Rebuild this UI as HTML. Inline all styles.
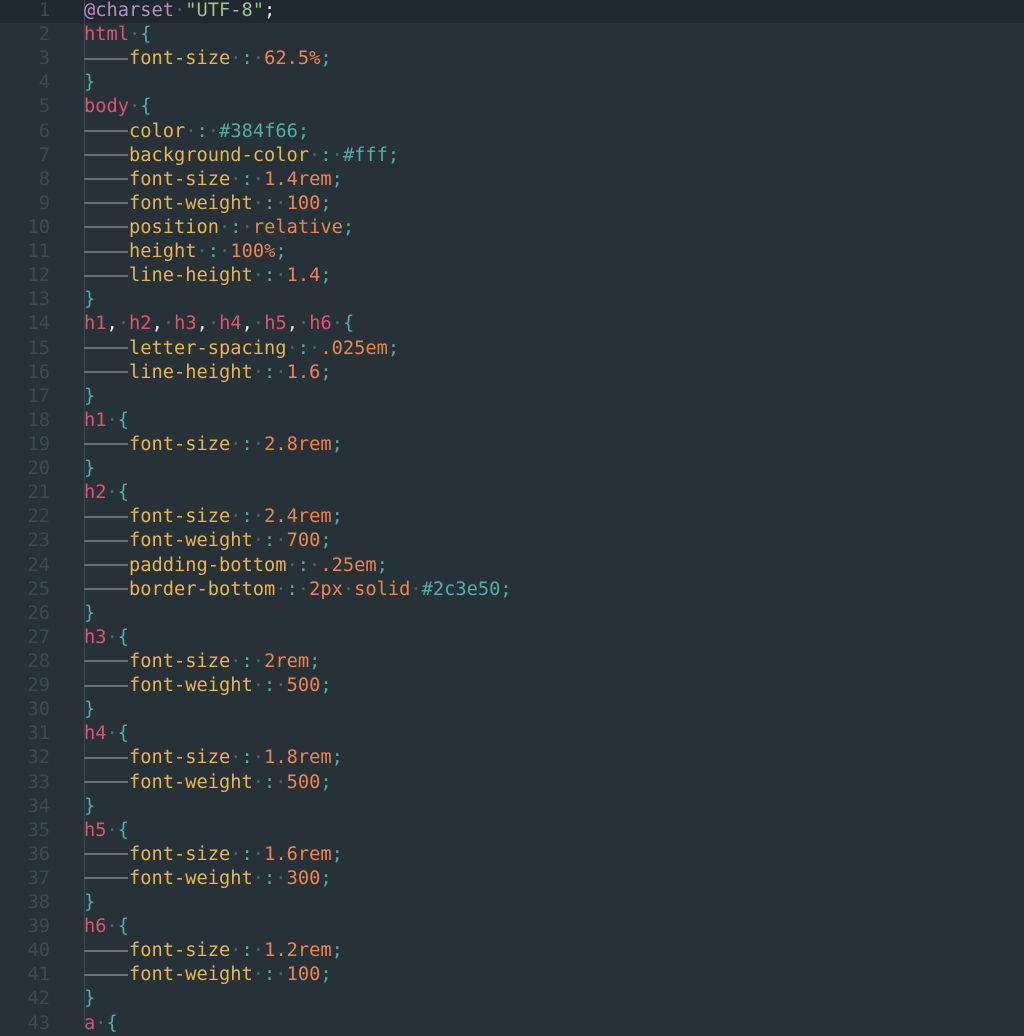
<!DOCTYPE html>
<html><head><meta charset="utf-8">
<style>
html,body{margin:0;padding:0;background:#263238;width:1024px;height:1024px;overflow:hidden}
body{font-family:"DejaVu Sans Mono","Liberation Mono",monospace;font-size:18.7px;}
#hl{position:absolute;left:0;top:0;width:1024px;height:23px;background:#1f282e}
#vl{position:absolute;left:84px;top:0;width:1px;height:1024px;background:#3a4850}
.ln{position:absolute;left:0;width:50px;text-align:right;color:#3b4a53}
.cd{position:absolute;left:84px;white-space:nowrap;color:#e8e8e8}
.row{height:24.12px;line-height:24.12px;white-space:nowrap}
.s{color:#e0546e}.p{color:#eab54f}.v{color:#f0844f}.t{color:#50aeaa}.a{color:#b58fc0}.g{color:#9cc38a}.w{color:#eee}
.d{color:#55646c}
.i{display:inline-block;width:44px;height:2px;background:#64727a;vertical-align:middle;margin-right:1px}
</style></head><body>
<div id="hl"></div><div id="vl"></div>
<div class="ln" style="top:-1px"><div class="row">1</div><div class="row">2</div><div class="row">3</div><div class="row">4</div><div class="row">5</div><div class="row">6</div><div class="row">7</div><div class="row">8</div><div class="row">9</div><div class="row">10</div><div class="row">11</div><div class="row">12</div><div class="row">13</div><div class="row">14</div><div class="row">15</div><div class="row">16</div><div class="row">17</div><div class="row">18</div><div class="row">19</div><div class="row">20</div><div class="row">21</div><div class="row">22</div><div class="row">23</div><div class="row">24</div><div class="row">25</div><div class="row">26</div><div class="row">27</div><div class="row">28</div><div class="row">29</div><div class="row">30</div><div class="row">31</div><div class="row">32</div><div class="row">33</div><div class="row">34</div><div class="row">35</div><div class="row">36</div><div class="row">37</div><div class="row">38</div><div class="row">39</div><div class="row">40</div><div class="row">41</div><div class="row">42</div><div class="row">43</div></div>
<div class="cd" style="top:-1px"><div class="row"><span class="a">@charset</span><span class="d">·</span><span class="g">"UTF-8"</span><span class="w">;</span></div><div class="row"><span class="s">html</span><span class="d">·</span><span class="t">{</span></div><div class="row"><span class="i"></span><span class="p">font-size</span><span class="d">·</span><span class="t">:</span><span class="d">·</span><span class="v">62.5%</span><span class="t">;</span></div><div class="row"><span class="t">}</span></div><div class="row"><span class="s">body</span><span class="d">·</span><span class="t">{</span></div><div class="row"><span class="i"></span><span class="p">color</span><span class="d">·</span><span class="t">:</span><span class="d">·</span><span class="t">#384f66;</span></div><div class="row"><span class="i"></span><span class="p">background-color</span><span class="d">·</span><span class="t">:</span><span class="d">·</span><span class="t">#fff;</span></div><div class="row"><span class="i"></span><span class="p">font-size</span><span class="d">·</span><span class="t">:</span><span class="d">·</span><span class="v">1.4rem</span><span class="t">;</span></div><div class="row"><span class="i"></span><span class="p">font-weight</span><span class="d">·</span><span class="t">:</span><span class="d">·</span><span class="v">100</span><span class="t">;</span></div><div class="row"><span class="i"></span><span class="p">position</span><span class="d">·</span><span class="t">:</span><span class="d">·</span><span class="v">relative</span><span class="t">;</span></div><div class="row"><span class="i"></span><span class="p">height</span><span class="d">·</span><span class="t">:</span><span class="d">·</span><span class="v">100%</span><span class="t">;</span></div><div class="row"><span class="i"></span><span class="p">line-height</span><span class="d">·</span><span class="t">:</span><span class="d">·</span><span class="v">1.4</span><span class="t">;</span></div><div class="row"><span class="t">}</span></div><div class="row"><span class="s">h1</span><span class="w">,</span><span class="d">·</span><span class="s">h2</span><span class="w">,</span><span class="d">·</span><span class="s">h3</span><span class="w">,</span><span class="d">·</span><span class="s">h4</span><span class="w">,</span><span class="d">·</span><span class="s">h5</span><span class="w">,</span><span class="d">·</span><span class="s">h6</span><span class="d">·</span><span class="t">{</span></div><div class="row"><span class="i"></span><span class="p">letter-spacing</span><span class="d">·</span><span class="t">:</span><span class="d">·</span><span class="v">.025em</span><span class="t">;</span></div><div class="row"><span class="i"></span><span class="p">line-height</span><span class="d">·</span><span class="t">:</span><span class="d">·</span><span class="v">1.6</span><span class="t">;</span></div><div class="row"><span class="t">}</span></div><div class="row"><span class="s">h1</span><span class="d">·</span><span class="t">{</span></div><div class="row"><span class="i"></span><span class="p">font-size</span><span class="d">·</span><span class="t">:</span><span class="d">·</span><span class="v">2.8rem</span><span class="t">;</span></div><div class="row"><span class="t">}</span></div><div class="row"><span class="s">h2</span><span class="d">·</span><span class="t">{</span></div><div class="row"><span class="i"></span><span class="p">font-size</span><span class="d">·</span><span class="t">:</span><span class="d">·</span><span class="v">2.4rem</span><span class="t">;</span></div><div class="row"><span class="i"></span><span class="p">font-weight</span><span class="d">·</span><span class="t">:</span><span class="d">·</span><span class="v">700</span><span class="t">;</span></div><div class="row"><span class="i"></span><span class="p">padding-bottom</span><span class="d">·</span><span class="t">:</span><span class="d">·</span><span class="v">.25em</span><span class="t">;</span></div><div class="row"><span class="i"></span><span class="p">border-bottom</span><span class="d">·</span><span class="t">:</span><span class="d">·</span><span class="v">2px</span><span class="d">·</span><span class="v">solid</span><span class="d">·</span><span class="t">#2c3e50;</span></div><div class="row"><span class="t">}</span></div><div class="row"><span class="s">h3</span><span class="d">·</span><span class="t">{</span></div><div class="row"><span class="i"></span><span class="p">font-size</span><span class="d">·</span><span class="t">:</span><span class="d">·</span><span class="v">2rem</span><span class="t">;</span></div><div class="row"><span class="i"></span><span class="p">font-weight</span><span class="d">·</span><span class="t">:</span><span class="d">·</span><span class="v">500</span><span class="t">;</span></div><div class="row"><span class="t">}</span></div><div class="row"><span class="s">h4</span><span class="d">·</span><span class="t">{</span></div><div class="row"><span class="i"></span><span class="p">font-size</span><span class="d">·</span><span class="t">:</span><span class="d">·</span><span class="v">1.8rem</span><span class="t">;</span></div><div class="row"><span class="i"></span><span class="p">font-weight</span><span class="d">·</span><span class="t">:</span><span class="d">·</span><span class="v">500</span><span class="t">;</span></div><div class="row"><span class="t">}</span></div><div class="row"><span class="s">h5</span><span class="d">·</span><span class="t">{</span></div><div class="row"><span class="i"></span><span class="p">font-size</span><span class="d">·</span><span class="t">:</span><span class="d">·</span><span class="v">1.6rem</span><span class="t">;</span></div><div class="row"><span class="i"></span><span class="p">font-weight</span><span class="d">·</span><span class="t">:</span><span class="d">·</span><span class="v">300</span><span class="t">;</span></div><div class="row"><span class="t">}</span></div><div class="row"><span class="s">h6</span><span class="d">·</span><span class="t">{</span></div><div class="row"><span class="i"></span><span class="p">font-size</span><span class="d">·</span><span class="t">:</span><span class="d">·</span><span class="v">1.2rem</span><span class="t">;</span></div><div class="row"><span class="i"></span><span class="p">font-weight</span><span class="d">·</span><span class="t">:</span><span class="d">·</span><span class="v">100</span><span class="t">;</span></div><div class="row"><span class="t">}</span></div><div class="row"><span class="s">a</span><span class="d">·</span><span class="t">{</span></div></div>
</body></html>
